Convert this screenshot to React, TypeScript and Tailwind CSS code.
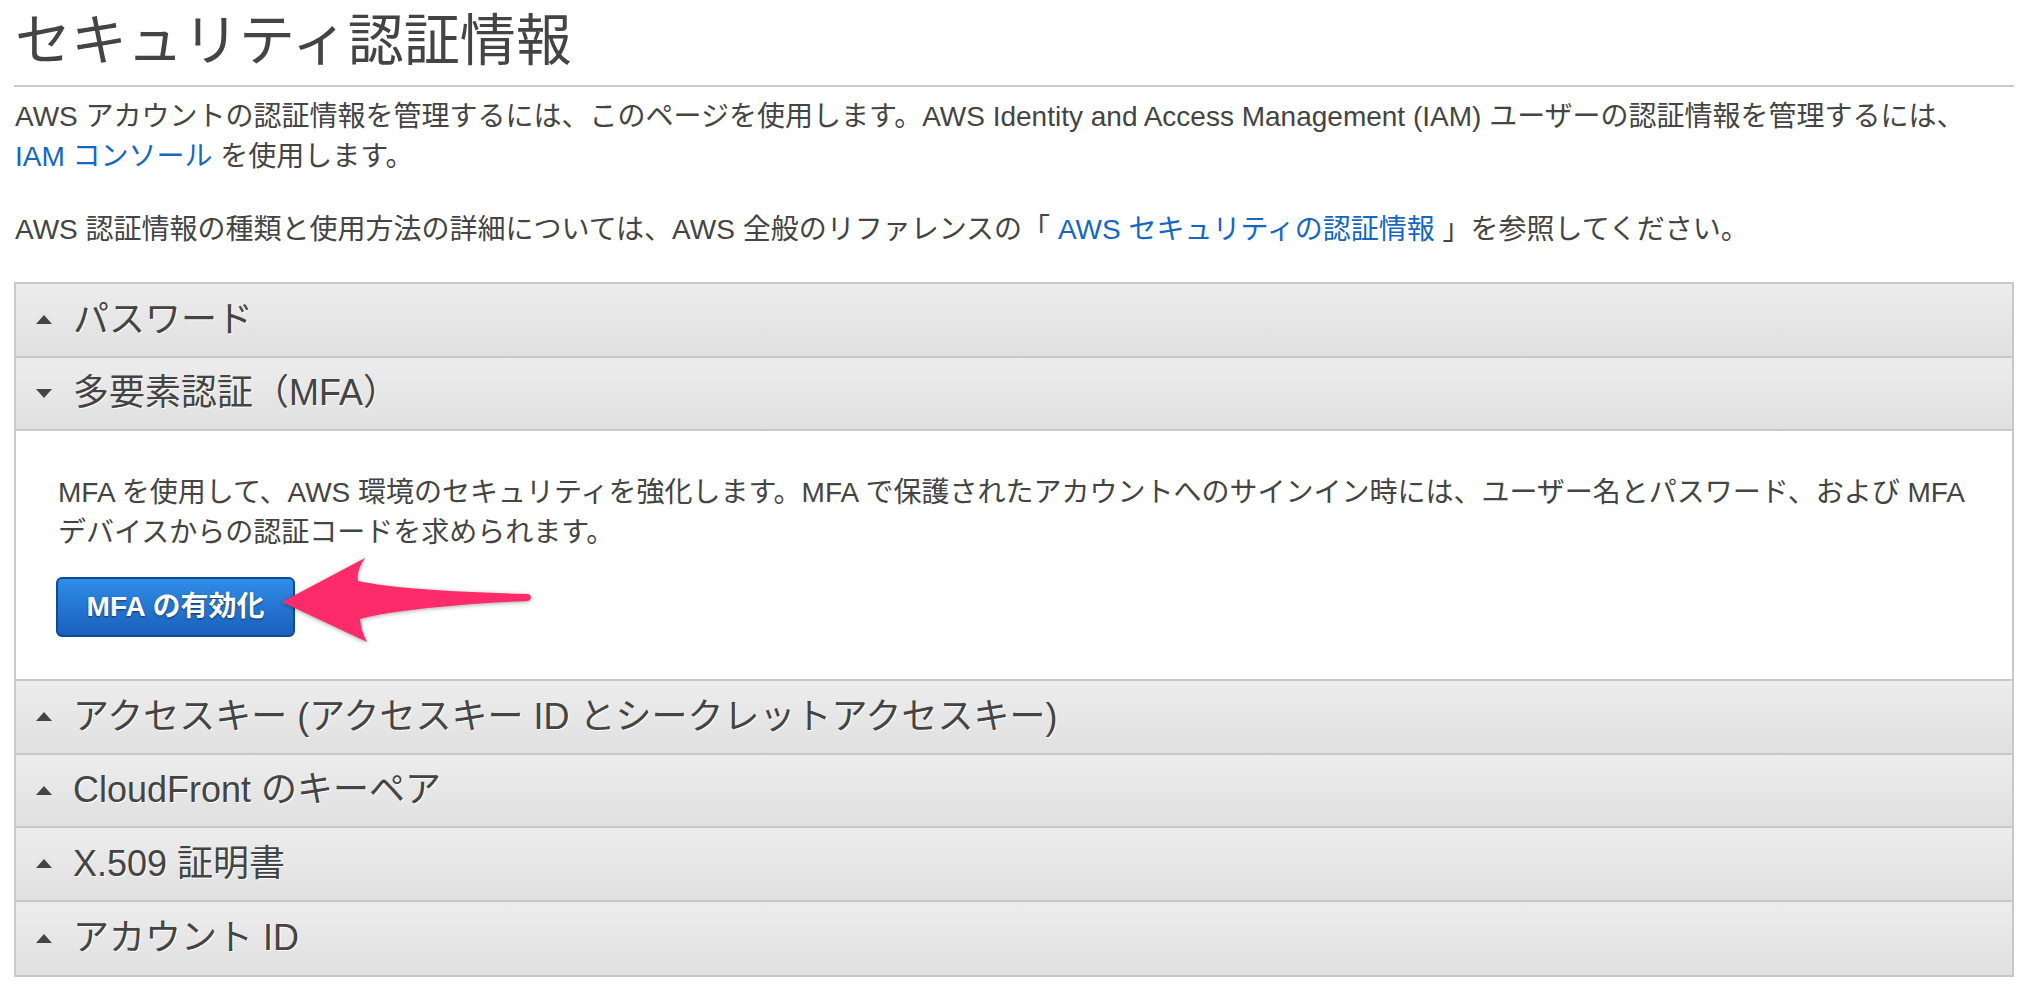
import React from "react";

const font = "font-['Liberation_Sans','Noto_Sans_CJK_JP',sans-serif]";

function Tri({ open }: { open?: boolean }) {
  return (
    <svg width="16" height="9" viewBox="0 0 16 9" className="shrink-0">
      {open ? (
        <polygon points="0,0 16,0 8,9" fill="#444" />
      ) : (
        <polygon points="0,9 8,0 16,9" fill="#444" />
      )}
    </svg>
  );
}

function Header({ label, open, last }: { label: string; open?: boolean; last?: boolean }) {
  return (
    <div
      className={`h-[73.5px] flex items-center gap-[21px] pl-[20px] bg-linear-to-b from-[#ededed] to-[#e0e0e0] ${
        last ? "" : "border-b-2 border-[#c8c8c8]"
      }`}
    >
      <Tri open={open} />
      <span className="text-[36px] text-[#444] whitespace-nowrap [text-shadow:1px_1px_0_#fff]">{label}</span>
    </div>
  );
}

function Arrow() {
  return (
    <svg
      width="275"
      height="105"
      viewBox="0 0 275 105"
      className="absolute left-[254px] top-[119px] drop-shadow-[0_1px_2px_rgba(0,0,0,0.35)]"
    >
      <path
        d="M12 52 L95 8 Q86 21 88 31 C120 38 180 42 258 44 A3.6 3.6 0 0 1 258 51 C200 53 120 60 90 69 Q91 81 97 92 Z"
        fill="#fe2b6a"
      />
    </svg>
  );
}

export default function App() {
  return (
    <div className={`min-h-screen bg-white pl-[14px] pr-[16px] pt-[7px] text-[#444] ${font}`}>
      <h1 className="text-[56px] leading-[68px] pl-[1px] text-[#444] font-normal">セキュリティ認証情報</h1>
      <div className="mt-[10px] h-[2px] bg-[#cccccc]" />

      <p className="mt-[10px] text-[28px] leading-[40px] whitespace-nowrap pl-[1px]">
        AWS アカウントの認証情報を管理するには、このページを使用します。AWS Identity and Access Management (IAM)
        ユーザーの認証情報を管理するには、
        <br />
        <a className="text-[#1567c0]">IAM コンソール</a> を使用します。
      </p>

      <p className="mt-[33px] text-[28px] leading-[40px] whitespace-nowrap pl-[1px]">
        AWS 認証情報の種類と使用方法の詳細については、AWS 全般のリファレンスの「{" "}
        <a className="text-[#1567c0]">AWS セキュリティの認証情報</a> 」を参照してください。
      </p>

      <div className="mt-[32px] border-2 border-[#c8c8c8]">
        <Header label="パスワード" />
        <Header label="多要素認証（MFA）" open />
        <div className="relative bg-white border-b-2 border-[#c8c8c8] pl-[42px] pt-[42px] pb-[42px]">
          <p className="text-[28px] leading-[40px] whitespace-nowrap">
            MFA を使用して、AWS 環境のセキュリティを強化します。MFA
            で保護されたアカウントへのサインイン時には、ユーザー名とパスワード、および MFA
            <br />
            デバイスからの認証コードを求められます。
          </p>
          <button className="mt-[24px] -ml-[2px] w-[239px] h-[60px] rounded-[6px] border-2 border-[#0d4d8f] bg-linear-to-b from-[#2f8de8] to-[#1a60bb] text-white text-[28px] font-bold [text-shadow:0_1px_2px_rgba(0,0,0,0.55)] flex items-center justify-center">
            MFA の有効化
          </button>
          <Arrow />
        </div>
        <Header label="アクセスキー (アクセスキー ID とシークレットアクセスキー)" />
        <Header label="CloudFront のキーペア" />
        <Header label="X.509 証明書" />
        <Header label="アカウント ID" last />
      </div>
    </div>
  );
}
